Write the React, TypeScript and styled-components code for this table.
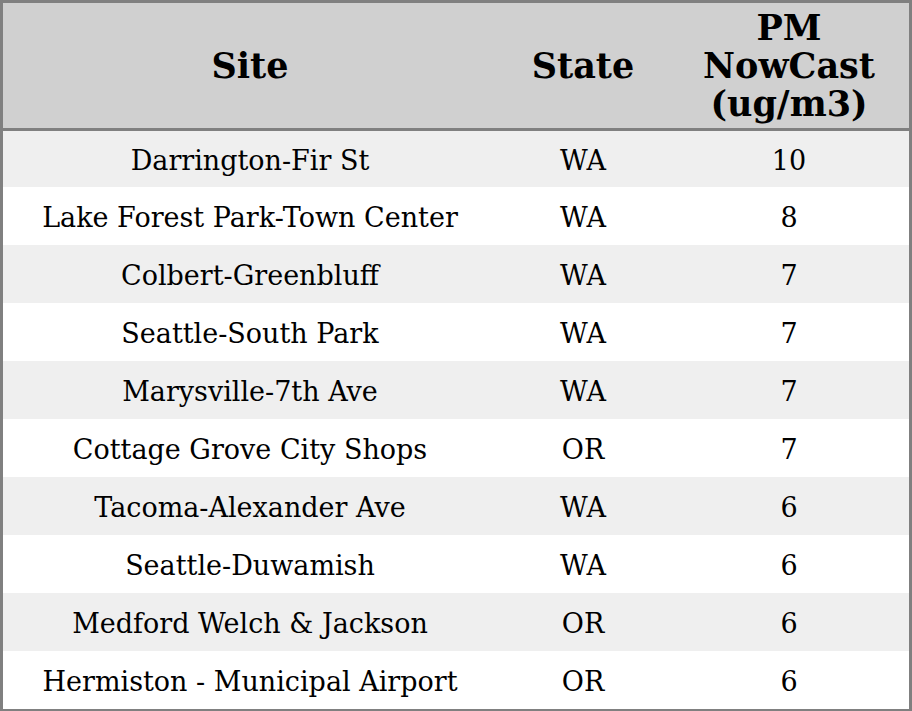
import React from "react";
import styled, { createGlobalStyle } from "styled-components";

const Global = createGlobalStyle`
  html, body { margin: 0; padding: 0; background: #ffffff; }
  body { font-family: "DejaVu Serif", serif; }
`;

const Table = styled.table`
  width: 912px;
  height: 711px;
  border-collapse: separate;
  border-spacing: 0;
  border: 3px solid #808080;
  box-sizing: border-box;
  font-family: "DejaVu Serif", serif;
  color: #000;
  table-layout: fixed;
`;

const HeadCell = styled.th<{ $w: number }>`
  width: ${(p) => p.$w}px;
  height: 128px;
  box-sizing: border-box;
  background: #d0d0d0;
  font-size: 35px;
  font-weight: bold;
  line-height: 38px;
  text-align: center;
  vertical-align: middle;
  padding: 1px 0 0;
  border-bottom: 3px solid #808080;
`;

const Row = styled.tr<{ $alt: boolean }>`
  background: ${(p) => (p.$alt ? "#efefef" : "#ffffff")};
`;

const Cell = styled.td<{ $first: boolean }>`
  height: ${(p) => (p.$first ? 56 : 58)}px;
  box-sizing: border-box;
  font-size: 27px;
  text-align: center;
  vertical-align: middle;
  padding: 2px 0 0;
  white-space: nowrap;
`;

const rows: [string, string, string][] = [
  ["Darrington-Fir St", "WA", "10"],
  ["Lake Forest Park-Town Center", "WA", "8"],
  ["Colbert-Greenbluff", "WA", "7"],
  ["Seattle-South Park", "WA", "7"],
  ["Marysville-7th Ave", "WA", "7"],
  ["Cottage Grove City Shops", "OR", "7"],
  ["Tacoma-Alexander Ave", "WA", "6"],
  ["Seattle-Duwamish", "WA", "6"],
  ["Medford Welch & Jackson", "OR", "6"],
  ["Hermiston - Municipal Airport", "OR", "6"],
];

export default function App() {
  return (
    <>
      <Global />
      <Table>
        <thead>
          <tr>
            <HeadCell $w={494}>Site</HeadCell>
            <HeadCell $w={172}>State</HeadCell>
            <HeadCell $w={240}>
              PM
              <br />
              NowCast
              <br />
              (ug/m3)
            </HeadCell>
          </tr>
        </thead>
        <tbody>
          {rows.map((r, i) => (
            <Row key={i} $alt={i % 2 === 0}>
              <Cell $first={i === 0}>{r[0]}</Cell>
              <Cell $first={i === 0}>{r[1]}</Cell>
              <Cell $first={i === 0}>{r[2]}</Cell>
            </Row>
          ))}
        </tbody>
      </Table>
    </>
  );
}
